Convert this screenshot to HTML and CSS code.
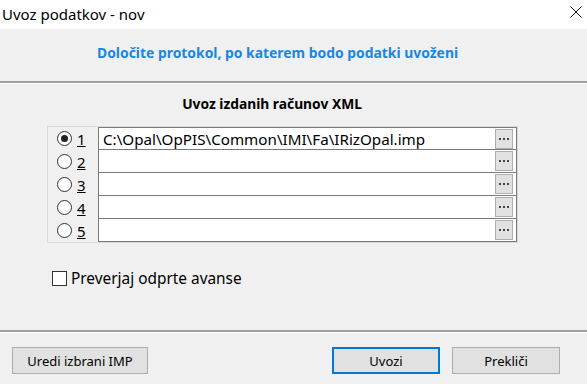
FILE: index.html
```html
<!DOCTYPE html>
<html lang="sl">

<head>
  <meta charset="UTF-8">
  <title>Uvoz podatkov - nov</title>
  <link rel="stylesheet" href="styles.css">
</head>

<body>
  <div class="window">
    <div class="titlebar">
      <span class="title">Uvoz podatkov - nov</span>
      <span class="close">
        <svg width="12" height="12" viewBox="0 0 12 12">
          <path d="M0.5 0.5 L11.5 11.5 M11.5 0.5 L0.5 11.5" stroke="#111" stroke-width="1" />
        </svg>
      </span>
    </div>

    <div class="header">
      <p class="header-text">Določite protokol, po katerem bodo podatki uvoženi</p>
    </div>

    <div class="content">
      <h2 class="section-title">Uvoz izdanih računov XML</h2>

      <div class="protocols">
        <div class="radios">
          <label class="radio-row"><span class="radio checked"></span><u>1</u></label>
          <label class="radio-row"><span class="radio"></span><u>2</u></label>
          <label class="radio-row"><span class="radio"></span><u>3</u></label>
          <label class="radio-row"><span class="radio"></span><u>4</u></label>
          <label class="radio-row"><span class="radio"></span><u>5</u></label>
        </div>
        <div class="fields">
          <div class="field">
            <span class="field-text">C:\Opal\OpPIS\Common\IMI\Fa\IRizOpal.imp</span>
            <span class="browse"><svg width="10" height="2" viewBox="0 0 10 2"><rect x="0" y="0" width="2" height="2" fill="#444" /><rect x="4" y="0" width="2" height="2" fill="#444" /><rect x="8" y="0" width="2" height="2" fill="#444" /></svg></span>
          </div>
          <div class="field"><span class="field-text"></span><span class="browse"><svg width="10" height="2" viewBox="0 0 10 2"><rect x="0" y="0" width="2" height="2" fill="#444" /><rect x="4" y="0" width="2" height="2" fill="#444" /><rect x="8" y="0" width="2" height="2" fill="#444" /></svg></span></div>
          <div class="field"><span class="field-text"></span><span class="browse"><svg width="10" height="2" viewBox="0 0 10 2"><rect x="0" y="0" width="2" height="2" fill="#444" /><rect x="4" y="0" width="2" height="2" fill="#444" /><rect x="8" y="0" width="2" height="2" fill="#444" /></svg></span></div>
          <div class="field"><span class="field-text"></span><span class="browse"><svg width="10" height="2" viewBox="0 0 10 2"><rect x="0" y="0" width="2" height="2" fill="#444" /><rect x="4" y="0" width="2" height="2" fill="#444" /><rect x="8" y="0" width="2" height="2" fill="#444" /></svg></span></div>
          <div class="field"><span class="field-text"></span><span class="browse"><svg width="10" height="2" viewBox="0 0 10 2"><rect x="0" y="0" width="2" height="2" fill="#444" /><rect x="4" y="0" width="2" height="2" fill="#444" /><rect x="8" y="0" width="2" height="2" fill="#444" /></svg></span></div>
        </div>
      </div>

      <label class="check-row"><span class="checkbox"></span>Preverjaj odprte avanse</label>
    </div>

    <div class="footer">
      <button class="btn btn-edit">Uredi izbrani IMP</button>
      <div class="footer-right">
        <button class="btn btn-default">Uvozi</button>
        <button class="btn">Prekliči</button>
      </div>
    </div>
  </div>
</body>

</html>
```

FILE: styles.css
```css
* {
  margin: 0;
  padding: 0;
  box-sizing: border-box;
}

body {
  width: 587px;
  height: 384px;
  overflow: hidden;
  background-color: #f0f0f0;
  font-family: "Noto Sans", "Open Sans", sans-serif;
  font-size: 14px;
  color: #000;
}

.window {
  display: flex;
  flex-direction: column;
  height: 384px;
}

/* barra de titulo */
.titlebar {
  display: flex;
  align-items: center;
  justify-content: space-between;
  height: 29px;
  padding: 0 5px 1px 2px;
  background-color: #fff;
}

.title {
  font-size: 15px;
}

.close {
  display: flex;
  margin-top: -4px;
}

.header {
  height: 54px;
  padding: 14px 0 0 97px;
  border-bottom: 2px solid #a0a0a0;
  box-shadow: 0 1px 0 #fff;
}

.header-text {
  color: #1a86e0;
  font-weight: 700;
  font-size: 13.9px;
}

.content {
  flex: 1;
  padding: 11px 0 0 47px;
  border-bottom: 2px solid #a0a0a0;
}

.section-title {
  font-size: 13.8px;
  font-weight: 700;
  text-align: center;
  width: 450px;
  margin-bottom: 13px;
}

.protocols {
  display: flex;
  width: 471px;
  border: 1px solid #d9d9d9;
}

.radios {
  width: 50px;
  display: flex;
  flex-direction: column;
}

.radio-row {
  display: flex;
  align-items: center;
  height: 23px;
  padding-left: 9px;
  gap: 5px;
  font-size: 15px;
}

.radio {
  width: 15px;
  height: 15px;
  border: 1px solid #333;
  border-radius: 50%;
  background-color: #fff;
  position: relative;
}

.radio.checked::after {
  content: "";
  position: absolute;
  top: 3px;
  left: 3px;
  width: 7px;
  height: 7px;
  border-radius: 50%;
  background-color: #222;
}

.fields {
  flex: 1;
  display: flex;
  flex-direction: column;
  border-left: 1px solid #7a7a7a;
  border-right: 1px solid #7a7a7a;
  border-bottom: 1px solid #7a7a7a;
}

.field {
  display: flex;
  align-items: center;
  height: 23px;
  background-color: #fff;
  border-top: 1px solid #7a7a7a;
}

.fields .field:first-child {
  height: 22px;
}

.field-text {
  flex: 1;
  padding-left: 4px;
  font-size: 15.2px;
  white-space: nowrap;
}

.browse {
  display: flex;
  align-items: center;
  justify-content: center;
  width: 18px;
  height: 20px;
  margin-right: 3px;
  background-color: #e1e1e1;
  border: 1px solid #adadad;
}

.check-row {
  display: flex;
  align-items: center;
  gap: 4px;
  margin: 25px 0 0 5px;
  font-size: 15.4px;
}

.checkbox {
  width: 15px;
  height: 15px;
  border: 1px solid #333;
  background-color: #fff;
}

.footer {
  display: flex;
  justify-content: space-between;
  align-items: flex-start;
  height: 52px;
  padding: 14px 27px 0 12px;
  border-top: 1px solid #fff;
}

.footer-right {
  display: flex;
  gap: 12px;
}

.btn {
  height: 27px;
  width: 108px;
  background-color: #e1e1e1;
  border: 1px solid #adadad;
  font-family: "Noto Sans", "Open Sans", sans-serif;
  font-size: 13px;
  color: #000;
}

.btn-edit {
  width: 136px;
}

.btn-default {
  border: 2px solid #0078d7;
}
```
